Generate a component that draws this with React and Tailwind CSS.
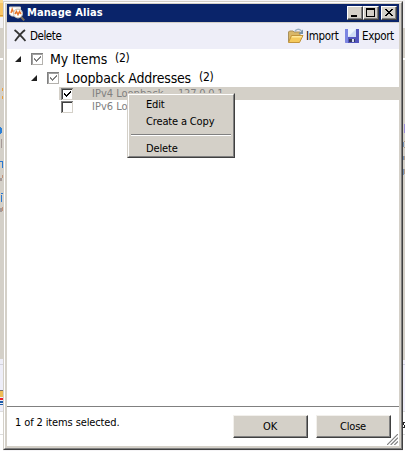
import React from "react";

function AppIcon() {
  return (
    <svg width="16" height="16" viewBox="0 0 16 16" className="shrink-0">
      <path d="M.5 2h11v9H2.500l-2-2z" fill="#fff" stroke="#d8d4cc" />
      <path d="M2 8l1.200-4 2 5" fill="none" stroke="#e8762c" strokeWidth="1.4" />
      <circle cx="9" cy="8.5" r="4.4" fill="#fff" stroke="#c8c4bc" strokeWidth="1.1" />
      <path d="M6 9l1.500-2.500L9 9.500l1.500-3 1.500 2.500" fill="none" stroke="#e8762c" strokeWidth="1.500" />
      <path d="M12.200 12l3 3.500" stroke="#7c705c" strokeWidth="2" />
    </svg>
  );
}

function FolderIcon() {
  return (
    <svg width="17" height="16" viewBox="0 0 17 16" className="shrink-0">
      <path d="M1.500 14V4l1-1h3.500l1 1h6v3" fill="#d9b768" stroke="#a9905c" />
      <path d="M1.500 14.500L4.500 7.500h11.500l-3.500 7z" fill="#f5c95c" stroke="#c2943b" />
      <path d="M5 8h10l-.6 1.500H4.500z" fill="#ffe99a" />
      <path d="M8 3.500C9 1 12 .5 14.500 3" fill="none" stroke="#9ab0c4" strokeWidth="1.500" />
      <path d="M16 1.500v4.500h-4.500z" fill="#7390a8" />
    </svg>
  );
}

function SaveIcon() {
  return (
    <svg width="14" height="14" viewBox="0 0 14 14" className="shrink-0">
      <path d="M0 0h14v14H1l-1-1z" fill="#5355bd" />
      <path d="M0 0h3v14H1l-1-1z" fill="#7d86e2" />
      <rect x="3" y="0" width="8" height="8" fill="#cfdcf5" />
      <path d="M3 0h8L3 8z" fill="#eef4fd" />
      <rect x="4" y="10" width="6" height="3" fill="#333a60" />
      <rect x="7" y="10" width="2" height="3" fill="#d5dcec" />
    </svg>
  );
}

function Check({ state, dim }) {
  return (
    <svg width="12" height="12" viewBox="0 0 12 12" className="shrink-0" shapeRendering="crispEdges">
      <rect width="12" height="12" fill="#fff" />
      <path d="M0 0h12v1H1v11H0z" fill="#808080" />
      <path d="M1 1h10v1H2v9H1z" fill={dim ? "#a0a0a0" : "#404040"} />
      <path d="M11 1h1v11H1v-1h10z" fill={dim ? "#b4b2ae" : "#d4d0c8"} />
      {state && (
        <path
          d="M3 5h1v1h1v1h1V6h1V5h1V4h1V3h1v2H9v1H8v1H7v1H6v1H5V8H4V7H3z"
          fill={dim ? "#808080" : "#000"}
        />
      )}
    </svg>
  );
}

function Arrow() {
  return (
    <svg width="6" height="6" viewBox="0 0 6 6" className="shrink-0">
      <path d="M6 0v6H0z" fill="#202020" />
    </svg>
  );
}

function CaptionButton({ children }) {
  return (
    <div className="h-[14px] w-[16px] border border-t-white border-l-white border-r-[#404040] border-b-[#404040] bg-[#d4d0c8]">
      <svg width="14" height="12" viewBox="0 0 14 12" shapeRendering="crispEdges">
        <path d="M13 0v11H0v1h14V0z" fill="#808080" />
        {children}
      </svg>
    </div>
  );
}

function DialogButton({ children }) {
  return (
    <div className="h-[23px] w-[75px] border border-t-[#f2f0ec] border-l-[#f2f0ec] border-r-[#404040] border-b-[#404040] bg-[#d4d0c8]">
      <div className="h-full border-r border-b border-[#808080] text-center leading-[21px] tracking-[-0.2px]">{children}</div>
    </div>
  );
}

function Backdrop() {
  return (
    <div className="w-[3px] shrink-0 overflow-hidden">
      <svg width="3" height="451" viewBox="0 0 3 451" shapeRendering="crispEdges">
        <rect width="3" height="451" fill="#d4d0c8" />
        <rect width="3" height="17" fill="#f7c565" />
        <rect width="3" height="3" fill="#fbd98d" />
        <rect y="15" width="3" height="1" fill="#d69b38" />
        <rect y="17" width="3" height="11" fill="#f2f1f3" />
        <rect y="58" width="3" height="2" fill="#fff" />
        <path d="M2 88h1v3H2zM2 96h1v3H2z" fill="#eea13c" />
        <path d="M0 127h1v1h1v5H1v1H0z" fill="#2a7fd6" />
        <path d="M1 139h1v9H1zM0 178h2v3H0zM0 208h2v4H0z" fill="#a69a98" />
        <path d="M0 161h3v7H2v-6H0zM1 193h2v1H1zM1 195h1v7H1z" fill="#2878d2" />
        <path d="M2 175h1v3H2zM2 207h1v4H2z" fill="#c49278" />
        <rect y="359" width="3" height="92" fill="#eeeef8" />
        <rect y="364" width="3" height="1" fill="#d2d2dc" />
        <rect y="390" width="3" height="1" fill="#77706a" />
        <rect y="391" width="3" height="6" fill="#efbd54" />
        <rect y="398" width="3" height="2" fill="#e8202c" />
        <rect y="401" width="3" height="2" fill="#1c5aa8" />
        <rect y="404" width="3" height="1" fill="#1c5aa8" />
        <rect y="411" width="3" height="40" fill="#fff" />
        <rect y="411" width="3" height="1" fill="#ddd" />
        <rect y="434" width="3" height="1" fill="#ddd" />
      </svg>
    </div>
  );
}

function RightBackdrop() {
  return (
    <svg width="2" height="451" viewBox="0 0 2 451" className="shrink-0" shapeRendering="crispEdges">
      <rect width="2" height="451" fill="#d4d0c8" />
      <rect width="2" height="28" fill="#f2f1f3" />
      <rect y="58" width="2" height="2" fill="#fff" />
      <rect x="1" y="124" width="1" height="9" fill="#9c8cd8" />
      <path d="M0 142h1v5H0zM0 156h1v4H0zM0 169h1v6H0z" fill="#7693b8" />
      <path d="M1 141h1v1H1zM1 147h1v1H1zM1 156h1v4H1zM1 169h1v5H1z" fill="#b39c86" />
      <rect y="360" width="2" height="91" fill="#f0effa" />
      <rect y="364" width="2" height="1" fill="#cfcfdf" />
      <rect y="411" width="2" height="40" fill="#fff" />
      <rect y="411" width="2" height="1" fill="#ddd" />
      <path d="M0 422h2v1H1v2h1v3H0v-1h1v-2H0z" fill="#222" />
      <rect y="434" width="2" height="1" fill="#ddd" />
    </svg>
  );
}

export default function App() {
  return (
    <div className="flex h-[451px] w-[405px] overflow-hidden bg-[#f5f4f6] font-['DejaVu_Sans_Condensed','DejaVu_Sans',sans-serif] text-[11px] [font-stretch:condensed] whitespace-nowrap text-black">
      <Backdrop />
      <div className="relative mt-[1px] flex h-[449px] w-[400px] shrink-0 flex-col border border-t-[#d4d0c8] border-l-[#d4d0c8] border-r-[#404040] border-b-[#404040]">
        <div className="flex h-full flex-col border border-t-white border-l-white border-r-[#808080] border-b-[#808080]">
          <div className="flex h-full flex-col border-2 border-t border-[#d4d0c8] bg-white">
            <div className="flex h-[18px] shrink-0 items-center bg-[#0a246a] pr-[2px] pl-[2px]">
              <AppIcon />
              <span className="mt-px ml-[2px] text-[11px] font-bold tracking-[0.1px] text-white">Manage Alias</span>
              <div className="ml-auto flex">
                <CaptionButton><rect x="3" y="8" width="6" height="2" fill="#000" /></CaptionButton>
                <CaptionButton><path d="M2 1h9v9H2zM3 3v6h7V3z" fill="#000" fillRule="evenodd" /></CaptionButton>
                <div className="w-[2px]" />
                <CaptionButton><path d="M3 2h2v1h1v1h2V3h1V2h2v1h-1v1H9v1H8v1h1v1h1v1h1v1H9V8H8V7H6v1H5v1H3V8h1V7h1V6h1V5H5V4H4V3H3z" fill="#000" /></CaptionButton>
              </div>
            </div>
            <div className="flex h-[27px] shrink-0 items-center border-t border-[#d4d0c8] bg-[#eeeef8] pl-[7px] text-[11.5px]">
              <svg width="12" height="13" viewBox="0 0 12 13" className="-mt-px shrink-0">
                <path d="M.5 1c4 3 7.500 7 11 11M11 1C7 4 4 8 1 12" fill="none" stroke="#333" strokeWidth="1.800" />
              </svg>
              <span className="mt-px ml-[4px] tracking-[-0.45px]">Delete</span>
              <div className="ml-auto flex items-center pr-[5px]">
                <FolderIcon />
                <span className="mt-px ml-[2px] w-[34px] tracking-[-0.3px]">Import</span>
                <div className="w-[5px]" />
                <SaveIcon />
                <span className="mt-px ml-[3px] w-[32px] tracking-[-0.35px]">Export</span>
              </div>
            </div>
            <div className="flex h-[19px] shrink-0 items-center pl-[8px]">
              <Arrow />
              <div className="ml-[10px]"><Check state dim /></div>
              <span className="mt-px ml-[7px] w-[58px] text-[14px] tracking-[-0.05px]">My Items</span>
              <span className="-mt-[2px] ml-[7px] text-[12px] tracking-[-0.3px]">(2)</span>
            </div>
            <div className="flex h-[19px] shrink-0 items-center pl-[24px]">
              <Arrow />
              <div className="ml-[10px]"><Check state dim /></div>
              <span className="mt-px ml-[7px] w-[126px] text-[14px] tracking-[-0.2px]">Loopback Addresses</span>
              <span className="-mt-[2px] ml-[7px] text-[12px] tracking-[-0.3px]">(2)</span>
            </div>
            <div className="ml-[52px] flex h-[13px] shrink-0 items-center bg-[#d4d0c8] pl-[2px] text-[#808080]">
              <Check state />
              <span className="ml-[19px] w-[86px] pt-[2px]">IPv4 Loopback</span>
              <span className="pt-[2px] tracking-[-0.2px]">127.0.0.1</span>
            </div>
            <div className="flex h-[13px] shrink-0 items-center text-[#808080]">
              <div className="ml-[54px]"><Check /></div>
              <span className="ml-[19px] pt-px">IPv6 Loopback</span>
            </div>
            <div className="grow" />
            <div className="flex h-[40px] shrink-0 border-t border-[#808080] pl-[8px]">
              <span className="mt-[8px] text-[11px] tracking-[-0.12px]">1 of 2 items selected.</span>
              <div className="mt-[8px] mr-[8px] ml-auto flex gap-[8px]">
                <DialogButton>OK</DialogButton>
                <DialogButton>Close</DialogButton>
              </div>
            </div>
          </div>
        </div>
        <svg width="11" height="11" viewBox="0 0 12 12" className="absolute right-[4px] bottom-[4px]">
          <path d="M0 12L12 0M4 12l8-8M8 12l4-4" stroke="#808080" strokeWidth="1.300" />
        </svg>
        <div className="absolute top-[91px] left-[123px] h-[65px] w-[108px] border border-t-[#d4d0c8] border-l-[#d4d0c8] border-r-[#404040] border-b-[#404040] bg-[#d4d0c8]">
          <div className="flex h-full flex-col border border-t-white border-l-white border-r-[#808080] border-b-[#808080] pt-px text-[11px] tracking-[-0.15px]">
            <div className="h-[17px] pl-[17px] leading-[17px]">Edit</div>
            <div className="h-[17px] pl-[17px] leading-[17px]">Create a Copy</div>
            <div className="mx-[2px] mt-[4px] mb-[4px] h-[2px] border-t border-b border-t-[#808080] border-b-white" />
            <div className="h-[17px] pl-[17px] leading-[17px]">Delete</div>
          </div>
        </div>
      </div>
      <RightBackdrop />
    </div>
  );
}
